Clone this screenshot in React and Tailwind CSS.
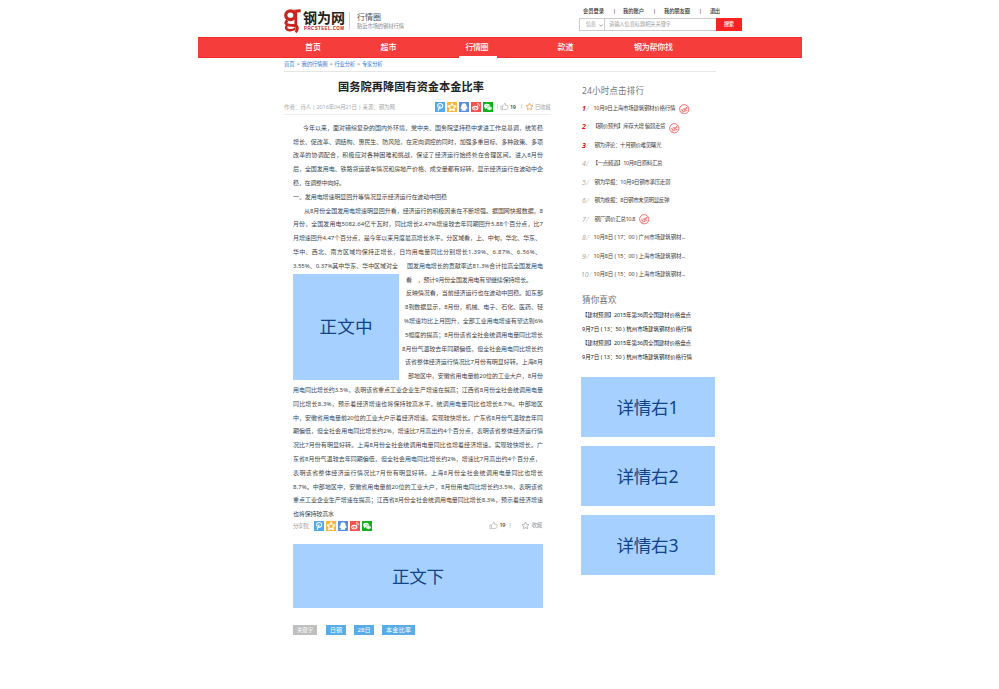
import { useLayoutEffect, useRef } from "react";

// Spreads a run of text across the width given by its class.
function Fit({ className = "", children }) {
  const outer = useRef(null);
  const inner = useRef(null);
  useLayoutEffect(() => {
    const target = outer.current.getBoundingClientRect().width;
    const el = inner.current;
    el.style.letterSpacing = "0px";
    const natural = el.getBoundingClientRect().width;
    const count = [...el.textContent].length;
    if (count > 1) el.style.letterSpacing = `${(target - natural) / (count - 1)}px`;
  }, []);
  return (
    <span ref={outer} className={`block shrink-0 whitespace-pre ${className}`}>
      <span ref={inner}>{children}</span>
    </span>
  );
}

const intro = [
  ["ml-[10px] w-[240px]", "今年以来，面对错综复杂的国内外环境，党中央、国务院坚持稳中求进工作总基调，统筹稳"],
  ["w-[250px]", "增长、促改革、调结构、惠民生、防风险，在定向调控的同时，加强多重目标、多种政策、多项"],
  ["w-[250px]", "改革的协调配合，积极应对各种困难和挑战，保证了经济运行始终处在合理区间。进入8月份"],
  ["w-[250px]", "后，全国发用电、铁路货运装车情况和房地产价格、成交量都有好转，显示经济运行在波动中企"],
  ["w-[52px]", "稳，在调整中向好。"],
  ["w-[154px]", "一、发用电增速明显回升等情况显示经济运行在波动中回稳"],
  ["ml-[11px] w-[239px]", "从8月份全国发用电增速明显回升看，经济运行的积极因素在不断增强。据国网快报数据，8"],
  ["w-[250px]", "月份，全国发用电5082.64亿千瓦时，同比增长2.47%增速较去年同期回升5.88个百分点，比7"],
  ["w-[248px]", "月增速回升4.47个百分点，是今年以来月度最高增长水平。分区域看，上、中旬，华北、华东、"],
  ["w-[248px]", "华中、西北、南方区域均保持正增长，日均用电量同比分别增长1.39%、6.87%、6.56%、"],
];

const beside = [
  ["w-[126px]", "看　，预计9月份全国发用电有望继续保持增长。"],
  ["w-[137px]", "反映情况看，当前经济运行也在波动中回稳。如东部"],
  ["w-[138px]", "8到数据显示，8月份，机械、电子、石化、医药、轻"],
  ["w-[139px]", "%增速均比上月回升，全部工业用电增速有望达到6%"],
  ["w-[138px]", "5幅度的提高；8月份该省全社会统调用电量同比增长"],
  ["w-[141px]", "8月份气温较去年同期偏低，但全社会用电同比增长约"],
  ["w-[138px]", "该省整体经济运行情况比7月份有明显好转。上海8月"],
  ["w-[135px]", "部地区中，安徽省用电量前20位的工业大户，8月份"],
];

const rest = [
  ["w-[250px]", "用电同比增长约3.5%，表明该省重点工业企业生产增速在提高；江西省8月份全社会统调用电量"],
  ["w-[250px]", "同比增长8.3%，预示着经济增速也将保持较高水平。统调用电量同比也增长8.7%。中部地区"],
  ["w-[250px]", "中，安徽省用电量前20位的工业大户示着经济增速。实现较快增长。广东省8月份气温较去年同"],
  ["w-[250px]", "期偏低，但全社会用电同比增长约2%，增速比7月高出约4个百分点，表明该省整体经济运行情"],
  ["w-[250px]", "况比7月份有明显好转。上海8月份全社会统调用电量同比也增着经济增速。实现较快增长。广"],
  ["w-[248px]", "东省8月份气温较去年同期偏低，但全社会用电同比增长约2%，增速比7月高出约4个百分点，"],
  ["w-[250px]", "表明该省整体经济运行情况比7月份有明显好转。上海8月份全社会统调用电量同比也增长"],
  ["w-[250px]", "8.7%。中部地区中，安徽省用电量前20位的工业大户，8月份用电同比增长约3.5%，表明该省"],
  ["w-[250px]", "重点工业企业生产增速在提高；江西省8月份全社会统调用电量同比增长8.3%，预示着经济增速"],
];

const ranking = [
  ["w-[82px]", "10月9日上海市场建筑钢材价格行情", "mt-px"],
  ["-ml-[1px] w-[73px]", "【钢价预判】库存大增 偏弱走货", "mt-[3px]"],
  ["ml-[1px] w-[67px]", "钢为评论：十月钢价难见曙光"],
  ["-ml-[1px] w-[70px]", "【一点频道】10月8日原料汇总"],
  ["ml-[1px] w-[76px]", "钢为早报：10月9日钢市承压走弱"],
  ["ml-[1px] w-[75px]", "钢为晚报：8日钢市未见明显反弹"],
  ["ml-[1px] w-[41px]", "钢厂调价汇总10.8", "mt-0"],
  ["w-[92px]", "10月8日 ( 17：00 ) 广州市场建筑钢材..."],
  ["w-[92px]", "10月8日 ( 15：00 ) 上海市场建筑钢材..."],
  ["w-[92px]", "10月8日 ( 15：00 ) 上海市场建筑钢材..."],
];

const guesses = [
  ["w-[109px]", "【建材预测】2015年第36周全国建材价格盘点"],
  ["w-[110px]", "9月7日 ( 13：50 ) 杭州市场建筑钢材价格行情"],
  ["w-[109px]", "【建材预测】2015年第36周全国建材价格盘点"],
  ["w-[110px]", "9月7日 ( 13：50 ) 杭州市场建筑钢材价格行情"],
];

const starPath = "M5 1.2l1.2 2.5 2.7.4-2 1.9.5 2.7L5 7.4 2.6 8.7l.5-2.7-2-1.9 2.7-.4z";

function Lines({ items, className = "" }) {
  return (
    <div className={className}>
      {items.map(([w, t], i) => (
        <div key={i} className="flex h-[13.8px] items-center">
          <Fit className={w}>{t}</Fit>
        </div>
      ))}
    </div>
  );
}

function ShareIcons() {
  return (
    <div className="flex gap-[2.1px]">
      <svg viewBox="0 0 10 10" className="size-[10px] bg-[#53aae8]">
        <path d="M3.2 8.8L4.2 5M3 5.2C1.8 2.2 4 1.4 5.3 1.5c2.3.1 3 2 2.1 3.5C6.600 6.500 4.600 6.300 4.300 5.500M5.300 3.400L4.500 5.200" fill="none" stroke="#fff" strokeWidth="1.1" />
      </svg>
      <svg viewBox="0 0 10 10" className="size-[10px] bg-[#fbb73c]">
        <path d={starPath} fill="none" stroke="#fff" strokeWidth="1.2" strokeLinejoin="round" />
      </svg>
      <svg viewBox="0 0 10 10" className="size-[10px] bg-[#5a8fdd]">
        <path d="M5 1.200C3.300 1.200 2.500 2.500 2.500 4.200 1.700 5.200 1.300 6.200 1.600 7c.3.2.700-.3.900-.5.100.6.400 1 .700 1.300-.8.500-.4.900.4.900h2.800c.800 0 1.200-.4.400-.9.300-.3.600-.7.700-1.300.2.200.600.700.900.5.300-.8-.1-1.800-.9-2.800 0-1.700-.8-3-2.500-3z" fill="#fff" />
      </svg>
      <svg viewBox="0 0 10 10" className="size-[10px] bg-[#f5534f]">
        <ellipse cx="4.300" cy="6" rx="3.100" ry="2.300" fill="#fff" />
        <ellipse cx="4.100" cy="6.200" rx="1.700" ry="1.300" fill="#f5534f" />
        <circle cx="3.800" cy="6.300" r=".7" fill="#fff" />
        <path d="M6 1.700c1.700-.3 2.900 1 2.400 2.600M6.200 3.200c.7-.1 1.100.4.900 1" fill="none" stroke="#fff" strokeWidth=".8" />
      </svg>
      <svg viewBox="0 0 10 10" className="size-[10px] bg-[#14b01c]">
        <ellipse cx="4" cy="4" rx="2.900" ry="2.300" fill="#fff" />
        <path d="M2.300 5.500L2 7.100l1.600-.9z" fill="#fff" />
        <ellipse cx="6.500" cy="6.300" rx="2.500" ry="2" fill="#fff" stroke="#14b01c" strokeWidth=".4" />
        <path d="M3 3.400h.7M4.700 3.400h.7M5.500 5.900h.6M7 5.900h.6" stroke="#14b01c" strokeWidth=".7" />
      </svg>
    </div>
  );
}

function Thumb() {
  return (
    <svg viewBox="0 0 10 10" className="size-[9px] shrink-0">
      <path d="M1 4.500h1.800v4H1zM2.800 4.600L4.700 2.500 5 1.200c1-.1 1.400.9.900 2.500h2.500c.8.100.8.900.5 1.300.2.500 0 1-.3 1.200.1.500-.1.900-.4 1.100 0 .7-.3 1.100-.9 1.100H4L2.800 8" fill="none" stroke="#aaa" strokeWidth=".7" />
    </svg>
  );
}

function Star({ className }) {
  return (
    <svg viewBox="0 0 10 10" className={`size-[9px] shrink-0 ${className}`}>
      <path d={starPath} fill="none" stroke="currentColor" strokeWidth=".9" strokeLinejoin="round" />
    </svg>
  );
}

function VipBadge({ className }) {
  return (
    <svg viewBox="0 0 10 10" className={`size-[10.500px] shrink-0 ${className}`}>
      <circle cx="5" cy="5" r="4.400" fill="none" stroke="#f25555" strokeWidth=".8" />
      <path d="M2.100 5l1.200 1.700L4.200 4M5.200 6.200l.4-2.400M6.200 5.800l.5-2.500c1.500-.4 1.600.9.100 1.300M2.500 8l5.500-2" fill="none" stroke="#f25555" strokeWidth=".75" />
    </svg>
  );
}

function Header() {
  return (
    <header className="flex h-[36.5px] pl-[86px]">
      <svg viewBox="0 0 18 25" className="mt-[9px] h-[25px] w-[18px] shrink-0">
        <ellipse cx="6.400" cy="6.300" rx="4.600" ry="4.400" fill="none" stroke="#cb2420" strokeWidth="3.300" />
        <path d="M9 .6c3 .8 5-.6 7.700-.2v3c-1.800-.3-3 .3-4.500.2z" fill="#cb2420" />
        <path d="M3.500 11.500C.5 13.500 2 16 5 16.200l5.500.3c4 .6 3.300 4.800 1 6.700M11.800 3v13" fill="none" stroke="#cb2420" strokeWidth="2.800" />
        <path d="M4.500 15.500C.8 17.500 1.500 20.800 5.500 21.200c2 .1 4.200-.3 6-1.800" fill="none" stroke="#cb2420" strokeWidth="2.400" />
      </svg>
      <div className="mt-[11px] ml-[1px] w-[42px]">
        <Fit className="w-[42px] text-[14px] leading-[14px] font-bold text-[#222]">钢为网</Fit>
        <Fit className="mt-[1px] ml-[1px] w-[40px] font-['Liberation_Sans'] text-[4.500px] leading-[5px] font-bold text-[#c8201c]">PRCSTEEL.COM</Fit>
      </div>
      <div className="mt-[12px] ml-[4px] h-[18px] w-px bg-[#d5d5d5]" />
      <div className="mt-[12px] ml-[7px] w-[47px]">
        <Fit className="w-[24px] text-[8px] leading-[10px] text-[#555]">行情圈</Fit>
        <Fit className="w-[47px] text-[5.300px] leading-[8px] text-[#888]">贴近市场的钢材行情</Fit>
      </div>
      <div className="ml-[175px] w-[163px] pt-[7px]">
        <div className="flex h-[9px] items-center pl-[4px] text-[5.300px] font-medium text-[#333]">
          <Fit className="w-[21px]">会员登录</Fit>
          <span className="ml-[9px] w-[10px]">|</span>
          <Fit className="w-[21px]">我的账户</Fit>
          <span className="ml-[9px] w-[11px]">|</span>
          <Fit className="w-[26px]">我的朋友圈</Fit>
          <span className="ml-[9px] w-[11px]">|</span>
          <Fit className="w-[10px]">退出</Fit>
        </div>
        <div className="mt-[2px] flex h-[13px] text-[5.200px] text-[#999]">
          <div className="flex w-[26px] items-center border border-[#ccc] pt-px pl-[6px]">
            <Fit className="w-[10px]">信息</Fit>
            <svg viewBox="0 0 4 3" className="ml-[3px] h-[3px] w-[4px]">
              <path d="M.3.5L2 2.300 3.700.5" fill="none" stroke="#777" strokeWidth=".7" />
            </svg>
          </div>
          <div className="flex w-[111px] items-center border-y border-[#ccc] pt-px pl-[4px]">
            <Fit className="w-[62px]">请输入信息标题相关关键字</Fit>
          </div>
          <div className="flex w-[26px] items-center justify-center bg-[#f82422] font-medium text-white">
            <Fit className="w-[10px]">搜索</Fit>
          </div>
        </div>
      </div>
    </header>
  );
}

function Article() {
  return (
    <article className="w-[267px] text-[6px] text-[#444]">
      <h1 className="flex h-[29px] items-center pl-[54px] text-[11.200px] font-bold text-[#222]">
        <Fit className="w-[146px]">国务院再降固有资金本金比率</Fit>
      </h1>
      <div className="flex h-[14px] items-start border-b border-[#eee] text-[5.500px] text-[#aaa]">
        <Fit className="mt-[2px] w-[111px] leading-[9px]">作者：诗人 | 2016年04月21日 | 来源：钢为网</Fit>
        <div className="ml-[39.500px] flex items-center pt-[.5px]">
          <ShareIcons />
          <span className="ml-[3px] w-[4px]">|</span>
          <Thumb />
          <Fit className="mt-[2px] ml-[1px] w-[6px] font-medium text-[#333]">19</Fit>
          <span className="ml-[4px] w-[5px]">|</span>
          <Star className="text-[#f7a04b]" />
          <Fit className="mt-[2px] ml-[1px] w-[16px]">已收藏</Fit>
        </div>
      </div>
      <div className="mt-[6px] ml-[9px] w-[250px]">
        <Lines items={intro} />
        <div className="flex h-[13.800px] items-center justify-between">
          <Fit className="w-[105px]">3.55%、0.37%其中华东、华中区域对全</Fit>
          <Fit className="w-[136px]">国发用电增长的贡献率达81.3%合计拉高全国发用电</Fit>
        </div>
        <div className="flex h-[110.400px] justify-between">
          <div className="mt-[1.500px] flex h-[105.500px] w-[106px] items-center justify-center bg-[#a6d0ff] text-[17.600px] text-[#114488]">
            <Fit className="w-[53px]">正文中</Fit>
          </div>
          <div className="flex w-[141px] flex-col">
            {beside.map(([w, t], i) => (
              <div key={i} className={`flex h-[13.800px] items-center ${i === 0 ? "pl-[4px]" : "justify-end"}`}>
                <Fit className={w}>{t}</Fit>
              </div>
            ))}
          </div>
        </div>
        <Lines items={rest} />
        <div className="h-[8.800px] pt-[2.500px] leading-[8px]">
          <Fit className="w-[41px]">也将保持较高水</Fit>
        </div>
        <div className="mt-[4.500px] flex h-[10px] items-center text-[5.500px] text-[#999]">
          <Fit className="mt-[2px] w-[20px]">分享到：</Fit>
          <div className="ml-[1px]"><ShareIcons /></div>
          <div className="ml-[117px]"><Thumb /></div>
          <Fit className="mt-px ml-[1px] w-[6px] font-medium text-[#333]">19</Fit>
          <span className="ml-[3px] w-[13px]">|</span>
          <Star className="text-[#aaa]" />
          <Fit className="mt-px ml-[1px] w-[11px]">收藏</Fit>
        </div>
        <div className="mt-[13.500px] flex h-[64px] items-center justify-center bg-[#a6d0ff] pt-[2px] text-[17.600px] text-[#114488]">
          <Fit className="w-[52px]">正文下</Fit>
        </div>
        <div className="mt-[16.500px] flex h-[10.500px] text-[6px] text-white">
          <div className="flex w-[24px] items-center justify-center bg-[#bfbfbf] pt-px text-[5.300px]"><Fit className="w-[16px]">关键字</Fit></div>
          <div className="ml-[9px] flex w-[20px] items-center justify-center bg-[#58ade9]"><Fit className="w-[12px]">日钢</Fit></div>
          <div className="ml-[8px] flex w-[20px] items-center justify-center bg-[#58ade9]"><Fit className="w-[13px]">28日</Fit></div>
          <div className="ml-[8px] flex w-[33px] items-center justify-center bg-[#58ade9]"><Fit className="w-[25px]">本金比率</Fit></div>
        </div>
      </div>
    </article>
  );
}

function Sidebar() {
  return (
    <aside className="ml-[30px] w-[134px] pt-[13px] text-[5.500px] text-[#444]">
      <h2 className="ml-[1px] flex h-[12px] items-center text-[8.600px] text-[#777]"><Fit className="w-[62px]">24小时点击排行</Fit></h2>
      <ol className="mt-[2px]">
        {ranking.map(([w, t, badge], i) => (
          <li key={i} className="flex h-[18.530px] items-center">
            <span className={`flex w-[12.500px] shrink-0 italic ${i === 9 ? "" : "pl-[1px]"}`}>
              <span className={`text-[7px] ${i < 3 ? "font-bold text-[#d01414]" : "text-[#aaa]"}`}>{i + 1}</span>
              <span className="ml-[.5px] text-[7px] text-[#ccc]">/</span>
            </span>
            <Fit className={w}>{t}</Fit>
            {badge && <VipBadge className={`ml-[3.500px] ${badge}`} />}
          </li>
        ))}
      </ol>
      <h2 className="mt-[10px] ml-[1px] flex h-[12px] items-center text-[8.600px] text-[#777]"><Fit className="w-[34.500px]">猜你喜欢</Fit></h2>
      <div className="mt-[3px] ml-[1px] text-[#222]"><Lines items={guesses} /></div>
      <div className="mt-[12.500px] flex flex-col gap-[9px] text-[17.600px] text-[#114488]">
        {["详情右1", "详情右2", "详情右3"].map((t) => (
          <div key={t} className="flex h-[60px] items-center justify-center bg-[#a6d0ff] pt-px pr-px"><Fit className="w-[62px]">{t}</Fit></div>
        ))}
      </div>
    </aside>
  );
}

export default function App() {
  return (
    <div lang="zh-CN" className="h-[689px] w-[999px] overflow-hidden bg-white pl-[198px] font-['Noto_Sans','Noto_Sans_CJK_SC',sans-serif] leading-none">
      <div className="w-[604px]">
        <Header />
        <nav className="flex h-[21px] items-center border-y border-[#f52a2a] bg-[#f53d3c] text-[8px] font-medium text-white">
          <Fit className="ml-[107px] w-[16px]">首页</Fit>
          <Fit className="ml-[59.500px] w-[16px]">超市</Fit>
          <div className="-mb-px ml-[62.500px] flex h-[21px] w-[38px] items-center justify-center border-b-2 border-white pt-px pr-[2px]">
            <Fit className="w-[23px]">行情圈</Fit>
          </div>
          <Fit className="ml-[60.500px] w-[16px]">款道</Fit>
          <Fit className="ml-[60.500px] w-[39px]">钢为帮你找</Fit>
        </nav>
        <div className="ml-[86px] w-[432px]">
          <div className="flex h-[14.500px] items-center gap-[2px] border-b border-[#e6e6e6] pt-px text-[5.300px] text-[#2f77d6]">
            <Fit className="w-[10.500px]">首页</Fit><span className="w-[3px] text-[#444]">&gt;</span>
            <Fit className="w-[26px]">我的行情圈</Fit><span className="w-[3px] text-[#444]">&gt;</span>
            <Fit className="w-[20.500px]">行业分析</Fit><span className="w-[3px] text-[#444]">&gt;</span>
            <Fit className="w-[20.500px]">专家分析</Fit>
          </div>
          <main className="flex">
            <Article />
            <Sidebar />
          </main>
        </div>
      </div>
    </div>
  );
}
